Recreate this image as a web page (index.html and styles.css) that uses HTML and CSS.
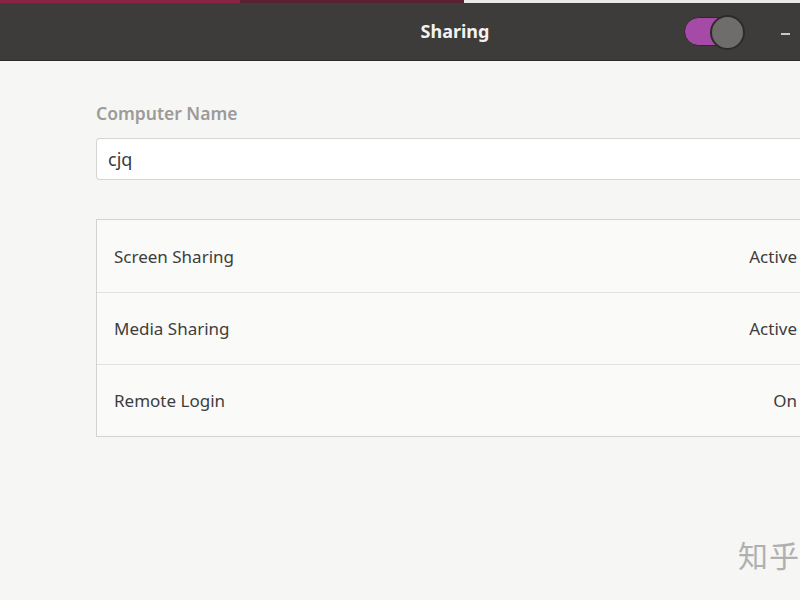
FILE: index.html
```html
<!DOCTYPE html>
<html lang="en">
<head>
  <meta charset="UTF-8" />
  <title>Sharing</title>
  <link rel="stylesheet" href="styles.css">
</head>
<body>
  <div class="topstrip">
    <span class="tab-a"></span>
    <span class="tab-b"></span>
    <span class="tab-c"></span>
  </div>

  <header class="headerbar">
    <h1 class="title">Sharing</h1>
    <div class="switch"><span class="knob"></span></div>
    <span class="minimize"></span>
  </header>

  <main class="content">
    <h2 class="label">Computer Name</h2>
    <div class="entry">cjq</div>

    <div class="list">
      <div class="row"><span>Screen Sharing</span><span class="state">Active</span></div>
      <div class="row"><span>Media Sharing</span><span class="state">Active</span></div>
      <div class="row"><span>Remote Login</span><span class="state">On</span></div>
    </div>
  </main>

  <div class="mark">知乎</div>
</body>
</html>
```
FILE: styles.css
```css
body { margin: 0; width: 800px; height: 600px; overflow: hidden; background: #f6f6f5; font-family: "Noto Sans", sans-serif; color: #3d3d3d; position: relative; }

.topstrip { display: flex; height: 3px; }
.tab-a { width: 240px; background: #8b2344; }
.tab-b { width: 224px; background: #5b2233; }
.tab-c { flex: 1; background: #e9e9e8; }

.headerbar { height: 57px; background: #3d3c3a; border-bottom: 1px solid #2a2a28; display: flex; align-items: center; position: relative; }
.title { margin: 0; position: absolute; left: 0; right: 0; top: 17px; text-align: center; padding-left: 110px; font-size: 18px; font-weight: 700; color: #f2f2f2; line-height: 22px; }
.switch { margin-left: 684px; width: 60px; height: 29px; border-radius: 15px; background: #a54aa6; position: relative; border: 1px solid #2e2a2c; box-sizing: border-box; }
.knob { position: absolute; right: -2px; top: -3px; width: 31px; height: 31px; border-radius: 50%; background: #6f6d6b; border: 2px solid #2c2b2a; }
.minimize { margin-left: 37px; margin-top: 4px; width: 9px; height: 2px; background: #c8c8c8; }

.content { padding-left: 96px; }
.label { margin: 41px 0 0; font-size: 17.5px; font-weight: 600; color: #9b9b9a; line-height: 22px; }
.entry { margin-top: 14px; height: 40px; background: #ffffff; border: 1px solid #d5d5d3; border-right: 0; border-radius: 4px 0 0 4px; font-size: 18px; line-height: 40px; padding-left: 11px; color: #3a3a3a; }

.list { margin-top: 39px; background: #fafaf9; border: 1px solid #d3d3d1; border-right: 0; }
.row { height: 72px; display: flex; align-items: center; justify-content: space-between; padding: 0 3px 0 17px; font-size: 17px; border-top: 1px solid #e1e1df; box-sizing: border-box; }
.row:first-child { border-top: 0; }

.mark { position: absolute; left: 738px; top: 532px; font-family: "Noto Sans CJK SC", sans-serif; font-size: 30px; color: #b0b0b0; letter-spacing: 1px; }
```
